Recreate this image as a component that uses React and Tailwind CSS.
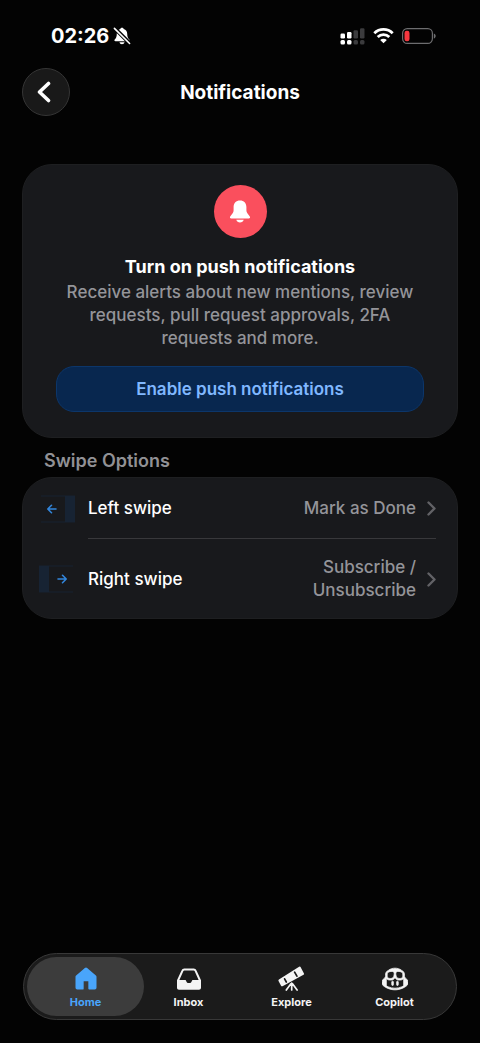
import React from "react";
import { GoHomeFill, GoCopilot } from "react-icons/go";

function BellOffIcon() {
  return (
    <svg width="18" height="18" viewBox="0 0 18 18" aria-hidden="true">
      <path d="M9 .8c-.9 0-1.500.5-1.700 1.200C5 2.600 3.800 4.500 3.800 6.800c0 3.300-.8 4.400-1.900 5.500-.9.900-.6 2 .6 2h13c1.200 0 1.500-1.100.6-2-1.100-1.100-1.900-2.200-1.900-5.500 0-2.300-1.200-4.200-3.500-4.800C10.500 1.300 9.900.8 9 .8zM6.500 15.300h5c-.2 1.200-1.200 2-2.500 2s-2.300-.8-2.500-2z" fill="#fff" />
      <path d="M1.500 1.200 16.800 16.400" stroke="#050505" strokeWidth="4" />
      <path d="M1.400 1.400 16.600 16.500" stroke="#fff" strokeWidth="1.600" strokeLinecap="round" />
    </svg>
  );
}

function SignalIcon() {
  return (
    <svg width="25" height="17" viewBox="0 0 25 17" aria-hidden="true">
      <g fill="#fff">
        <rect x="0.500" y="5.500" width="4.500" height="5" rx="1.200" />
        <rect x="7" y="4" width="4.500" height="6.500" rx="1.200" />
        <rect x="0.500" y="12" width="4.500" height="4.500" rx="1.500" />
        <rect x="7" y="12" width="4.500" height="4.500" rx="1.500" />
      </g>
      <g fill="#3b3b3d">
        <rect x="13.500" y="2.200" width="4.500" height="8.300" rx="1.200" />
        <rect x="20" y="0.300" width="4.500" height="10.200" rx="1.200" />
        <rect x="13.500" y="12" width="4.500" height="4.500" rx="1.500" />
        <rect x="20" y="12" width="4.500" height="4.500" rx="1.500" />
      </g>
    </svg>
  );
}

function WifiIcon() {
  return (
    <svg width="21" height="16" viewBox="0 0 21 16" fill="none" stroke="#fff" aria-hidden="true">
      <path d="M1.300 5.200a13.200 13.200 0 0 1 18.400 0" strokeWidth="2.800" />
      <path d="M4.700 9a8.300 8.300 0 0 1 11.600 0" strokeWidth="2.800" />
      <path d="M10.500 15.300 7.200 12a4.700 4.700 0 0 1 6.600 0z" fill="#fff" stroke="none" />
    </svg>
  );
}

function BatteryIcon() {
  return (
    <svg width="34" height="16" viewBox="0 0 34 16" aria-hidden="true">
      <rect x="0.600" y="0.600" width="29.800" height="14.800" rx="4.600" fill="none" stroke="#6d6d6f" strokeWidth="1.200" />
      <rect x="2.500" y="2.800" width="5" height="10.400" rx="2.200" fill="#f5373f" />
      <path d="M31.800 5.400c1.200.4 1.900 1.400 1.900 2.600s-.7 2.200-1.900 2.600z" fill="#6d6d6f" />
    </svg>
  );
}

function BellIcon() {
  return (
    <svg width="22" height="24" viewBox="0 0 22 24" fill="#fff" aria-hidden="true">
      <path d="M11 .5C7.100.5 4.600 3.200 4.600 7v3.200c0 1-.3 1.900-.8 2.700L1.200 16.600c-.7 1 0 2 1 2h17.600c1 0 1.700-1 1-2l-2.600-3.700c-.5-.8-.8-1.700-.8-2.700V7C17.400 3.200 14.900.5 11 .5z" />
      <path d="M7.300 19.700h7.400c-.5 1.700-1.900 2.700-3.700 2.700s-3.200-1-3.700-2.700z" />
    </svg>
  );
}

function InboxIcon() {
  return (
    <svg width="26" height="24" viewBox="0 0 26 24" aria-hidden="true">
      <path d="M2 13.500 6.500 3.700c.3-.8 1-1.200 1.800-1.200h9.400c.8 0 1.500.4 1.800 1.200L24 13.500" fill="none" stroke="#f4f4f4" strokeWidth="2" />
      <path d="M1 13h8.600l1.200 2.200c.2.500.6.700 1.100.7h2.200c.5 0 .9-.2 1.100-.7l1.200-2.200H25v7.700c0 1.200-.9 2-2 2H3c-1.200 0-2-.9-2-2z" fill="#f4f4f4" />
    </svg>
  );
}

function TelescopeIcon() {
  return (
    <svg width="27" height="25" viewBox="0 0 27 25" fill="none" strokeLinecap="round" strokeLinejoin="round" aria-hidden="true">
      <path d="M1.500 14.500 21.700 1.700 25 7.900 4 19.200z" fill="#f4f4f4" stroke="#f4f4f4" strokeWidth="2.200" />
      <path d="M6.600 12.800 8.300 16M16.600 6.200l2.300 4" stroke="#1b1b1b" strokeWidth="1.700" />
      <path d="M13.700 17v7M12.700 18 8.300 24M14.700 18l4.400 6" stroke="#f4f4f4" strokeWidth="1.700" />
    </svg>
  );
}

function Chevron() {
  return (
    <svg className="shrink-0" width="9" height="15" viewBox="0 0 9 15" fill="none" stroke="#626266" strokeWidth="2.400" strokeLinecap="round" strokeLinejoin="round" aria-hidden="true">
      <path d="M1.500 1.500 7.500 7.500 1.500 13.500" />
    </svg>
  );
}

function SwipePreview({ direction }) {
  const left = direction === "left";
  return (
    <svg className="shrink-0" width="38" height="28" viewBox="0 0 38 28" fill="none" aria-hidden="true">
      <g transform={left ? undefined : "translate(38 0) scale(-1 1)"}>
        <path d="M3 1h34M3 27h34" stroke="#172230" />
        <rect x="27" y="1" width="10" height="26" fill="#172333" />
        <path d="M18 14h-8M13.500 10.300 9.800 14l3.700 3.700" stroke="#3286dc" strokeWidth="1.600" strokeLinecap="round" strokeLinejoin="round" />
      </g>
    </svg>
  );
}

function SwipeRow({ direction, label, value, divided }) {
  return (
    <button type="button" className="flex w-full items-center pr-[21px] pl-[15px] text-left">
      <SwipePreview direction={direction} />
      <span className={`ml-3 flex flex-1 items-center justify-between ${divided ? "border-b border-[#38383b] pt-[19px] pb-[18px]" : "pt-[17px] pb-4"}`}>
        <span className="text-white">{label}</span>
        <span className="flex items-center gap-[11px]">
          <span className="max-w-32 text-right text-[#949499]">{value}</span>
          <Chevron />
        </span>
      </span>
    </button>
  );
}

const tabs = [
  { label: "Home", icon: <GoHomeFill size={28} />, active: true },
  { label: "Inbox", icon: <InboxIcon /> },
  { label: "Explore", icon: <TelescopeIcon /> },
  { label: "Copilot", icon: <GoCopilot size={26} stroke="currentColor" strokeWidth="0.7" /> },
];

export default function App() {
  return (
    <div className="flex min-h-screen flex-col bg-[#030303] px-[22px] pb-[23px] font-['Inter',sans-serif] text-[17px] leading-[23px] font-medium text-white">
      <div className="flex h-17 items-center justify-between pt-1 pr-[22px] pl-[29px]">
        <div className="flex items-center gap-1">
          <span className="text-[20px] font-bold">02:26</span>
          <BellOffIcon />
        </div>
        <div className="flex items-center gap-2">
          <SignalIcon />
          <WifiIcon />
          <BatteryIcon />
        </div>
      </div>

      <header className="grid grid-cols-[48px_1fr_48px] items-center">
        <button type="button" aria-label="Back" className="flex size-12 items-center justify-center rounded-full border border-[#353535] bg-[#191919]">
          <svg className="mr-1" width="14" height="22" viewBox="0 0 14 22" fill="none" stroke="#fff" strokeWidth="3.600" strokeLinecap="round" strokeLinejoin="round" aria-hidden="true">
            <path d="M11.500 2.500 2.500 11l9 8.500" />
          </svg>
        </button>
        <h1 className="text-center text-[19px] font-bold">Notifications</h1>
      </header>

      <main>
        <section className="mt-12 flex flex-col items-center rounded-[30px] border border-[#1e1f21] bg-[#18191c] px-[33px] pt-5 pb-[25px] text-center">
          <div className="flex size-[53px] items-center justify-center rounded-full bg-[#fa4f5d]">
            <BellIcon />
          </div>
          <h2 className="mt-[15px] text-[18px] leading-7 font-bold">Turn on push notifications</h2>
          <p className="text-[#949499]">
            Receive alerts about new mentions, review requests, pull request approvals, 2FA requests and more.
          </p>
          <button type="button" className="mt-4 h-[46px] w-full rounded-[18px] border border-[#0c366a] bg-[#08274f] font-semibold text-[#80b8ff]">
            Enable push notifications
          </button>
        </section>

        <h2 className="mt-[11px] mb-[5px] px-[22px] text-[18px] font-semibold text-[#919195]">Swipe Options</h2>
        <section className="rounded-[30px] border border-[#1e1f21] bg-[#18191c]">
          <SwipeRow direction="left" label="Left swipe" value="Mark as Done" divided />
          <SwipeRow direction="right" label="Right swipe" value="Subscribe / Unsubscribe" />
        </section>
      </main>

      <nav className="mx-px mt-auto grid grid-cols-4 rounded-full border border-[#383838] bg-[#1b1b1b] px-[10px] py-[3px]">
        {tabs.map((tab) => (
          <a
            key={tab.label}
            href={`#${tab.label.toLowerCase()}`}
            aria-current={tab.active ? "page" : undefined}
            className={`flex h-[59px] flex-col items-center justify-center gap-[3px] rounded-full pt-[3px] text-[11px] leading-4 font-bold ${tab.active ? "-mx-[7px] bg-[#3c3c3c] text-[#49a5fb]" : "text-[#f4f4f4]"}`}
          >
            <span className="flex h-6 items-center">{tab.icon}</span>
            {tab.label}
          </a>
        ))}
      </nav>
    </div>
  );
}
